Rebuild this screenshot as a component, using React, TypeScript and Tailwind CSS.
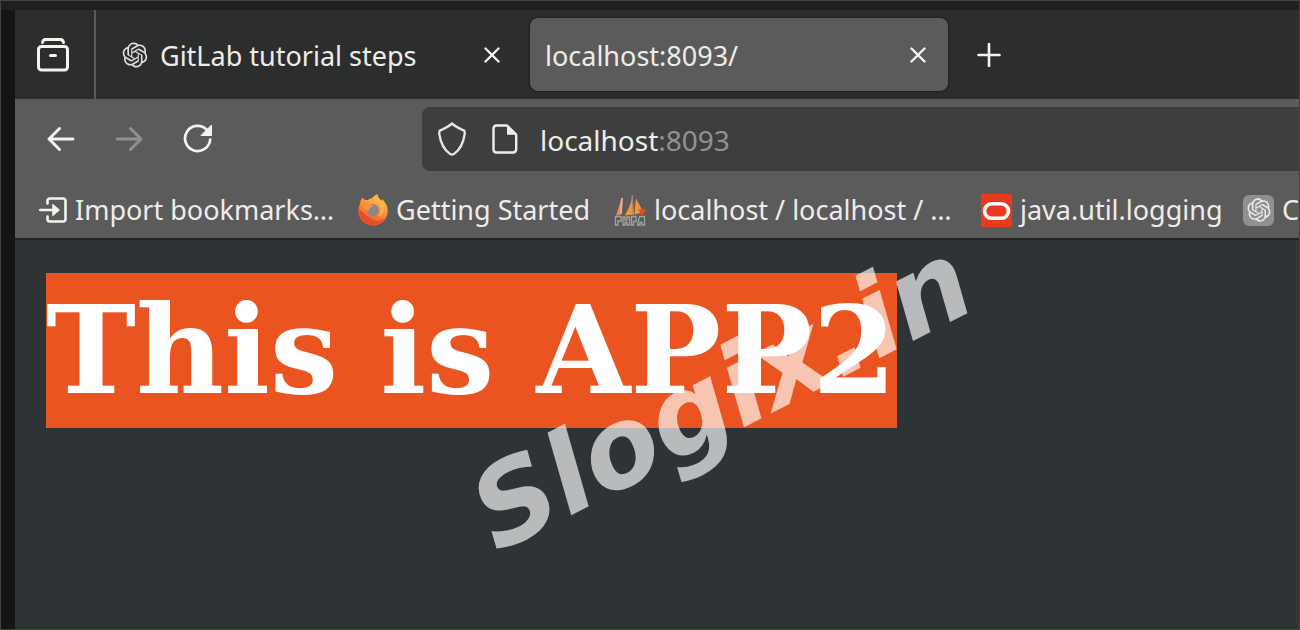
import type { ReactNode } from "react";
import { RiOpenaiFill } from "react-icons/ri";

function ArchiveIcon() {
  return (
    <svg width="32" height="34" viewBox="0 0 32 34" fill="none" stroke="#f6f3ef" strokeWidth="3" strokeLinecap="round">
      <path d="M5.500 4.500C6 2.200 7 1.600 8.500 1.600h15c1.500 0 2.500.6 3 2.900" />
      <rect x="1.500" y="8.500" width="29" height="23.500" rx="3" />
      <path d="M13.500 17.500h5" />
    </svg>
  );
}

function CloseIcon() {
  return (
    <svg width="16" height="16" viewBox="0 0 16 16" stroke="#f6f3ef" strokeWidth="2.400" strokeLinecap="round">
      <path d="M1.500 1.500l13 13M14.500 1.500l-13 13" />
    </svg>
  );
}

function PlusIcon() {
  return (
    <svg width="24" height="24" viewBox="0 0 24 24" stroke="#f6f3ef" strokeWidth="2.600" strokeLinecap="round">
      <path d="M12 1v22M1.500 12h21" />
    </svg>
  );
}

function ArrowIcon({ flip = false }: { flip?: boolean }) {
  return (
    <svg
      width="28"
      height="26"
      viewBox="0 0 28 26"
      fill="none"
      stroke={flip ? "#8d9291" : "#f6f3ef"}
      strokeWidth="2.900"
      strokeLinecap="round"
      strokeLinejoin="round"
      className={flip ? "-scale-x-100" : ""}
    >
      <path d="M26 13H2M12.500 2.500L2 13l10.500 10.500" />
    </svg>
  );
}

function ReloadIcon() {
  return (
    <svg width="30" height="30" viewBox="0 0 30 30" fill="none">
      <path d="M23.500 5.500A12.600 12.600 0 1 0 27.200 15.500" stroke="#f6f3ef" strokeWidth="2.700" strokeLinecap="round" />
      <path d="M28.500 1v10.500H18z" fill="#f6f3ef" stroke="#f6f3ef" strokeLinejoin="round" />
    </svg>
  );
}

function ShieldIcon() {
  return (
    <svg width="28" height="34" viewBox="0 0 30 34" preserveAspectRatio="none" fill="none" stroke="#e6e4e1" strokeWidth="2.500" strokeLinejoin="round">
      <path d="M15 1.500C11 5 6 6.700 2.200 8.500c-1.300.6-1 2-.7 4C3 22 7.500 28.500 13 32q2 1 4 0c5.500-3.500 10-10 11.500-19.500.3-2 .6-3.400-.7-4C24 6.700 19 5 15 1.500z" />
    </svg>
  );
}

function PageIcon() {
  return (
    <svg width="26" height="30" viewBox="0 0 26 30" fill="none">
      <path
        d="M4.500 1.500H15l9.200 9.200V25q0 3.500-3.500 3.500H4.500Q1.500 28.500 1.500 25V5q0-3.500 3-3.500z"
        stroke="#f0eeeb"
        strokeWidth="2.400"
        strokeLinejoin="round"
      />
      <path d="M15 1.500v9.200h9.200z" fill="#f0eeeb" />
    </svg>
  );
}

function ImportIcon() {
  return (
    <svg width="28" height="26" viewBox="0 0 28 26" fill="none" stroke="#f6f3ef" strokeWidth="2.600" strokeLinecap="round">
      <path d="M8.500 6.500V4q0-2.500 2.500-2.500h13q2.500 0 2.500 2.500v18q0 2.500-2.500 2.500H11q-2.500 0-2.500-2.500v-2.500" />
      <path d="M1.200 13h14" />
      <path d="M14 7.500L20.500 13 14 18.500z" fill="#f6f3ef" strokeWidth="1" />
    </svg>
  );
}

function FirefoxIcon() {
  return (
    <svg width="30" height="32" viewBox="0 0 30 32">
      <defs>
        <linearGradient id="fox" x1="0.7" y1="0.1" x2="0.3" y2="1">
          <stop offset="0" stopColor="#ffbd4f" />
          <stop offset="0.45" stopColor="#f98b33" />
          <stop offset="1" stopColor="#e34a2b" />
        </linearGradient>
      </defs>
      <path
        d="M4.500 3.500c1 2 2.500 2.600 5.500 2.500 1-1 3-2 4.500-2C15 2.500 17 1.300 19.200.3c.5 3.200 2.300 4.200 4.500 6.500l.8-1.500c3.600 4 5.300 7.500 5.200 12.200C29.400 25.500 23 31.700 15 31.700S.6 25.500.4 17.500C.3 13 1.500 11.500 2 9.500c.3-2.500 1.300-4.500 2.500-6z"
        fill="url(#fox)"
      />
      <path d="M1 15c0 9 5 14 12 15.500 6 1 11-2 13.500-6-4 3-9 3.500-13.500.5C9 22 5 19 1 15z" fill="#e84a2c" />
      <circle cx="15" cy="16" r="6" fill="#8a8784" />
      <path d="M5.500 9.500c3-1.200 5 0 6.300 1.200l3.700.6c0 1.500-3.500 2-4 3.500-.8 2.300-2 2.500-3.500 1.500-1.500-1.500-2.500-4.500-2.500-6.800z" fill="#fb9137" />
      <path d="M19.200.3c-2.500 3.700-2 6.200 1 9.200 4 4 3 9.500 0 13 5-1 6-6 5.500-9.500C25 7 20 6 19.200.3z" fill="#ffb04a" />
    </svg>
  );
}

// phpMyAdmin: three sails above the outlined hull lettering
function SailsIcon() {
  return (
    <svg width="32" height="32" viewBox="0 0 32 32" fill="none">
      <path d="M7.500 4L2 21.500l5.500-1z" fill="#f0864a" />
      <path d="M8 4l-1 15.500" stroke="#e8b5a5" strokeWidth="1.800" />
      <path d="M18 .5C18 9 14 15 11 21.500l9-1z" fill="#f8932f" />
      <path d="M18.300 1l.7 18.500" stroke="#9b8c83" strokeWidth="1.200" />
      <path d="M22 4.500c-1 6-1 10-1.500 16l8.500-2C27.500 13 24 9 22 4.500z" fill="#f8932f" />
      <path d="M24 15.500l6.500-.5 1.500 1.500-4 5z" fill="#e34b1f" />
      <path
        d="M1.500 31v-8.500H7v4.500H4v4zM9 31v-8h2v3h2v-3h2.500v8H13v-2.500h-2V31zM17.500 31v-8.500H22v5h-2.500V31zM23.500 31l2-8.500h5V31H28v-2.500h-2V31z"
        stroke="#a2a4a3"
        strokeWidth="1.300"
      />
    </svg>
  );
}

function OracleIcon() {
  return (
    <svg width="31" height="33" viewBox="0 0 31 33" fill="none">
      <path d="M0 0h31v33H0z" fill="#ea3a1e" />
      <rect x="3.500" y="9.800" width="24" height="14.500" rx="7.200" stroke="#fff" strokeWidth="3.600" />
    </svg>
  );
}

function Bookmark({ icon, label, className = "" }: { icon: ReactNode; label: string; className?: string }) {
  return (
    <a href="#" className={`flex shrink-0 items-center gap-2 whitespace-nowrap ${className}`}>
      {icon}
      <span>{label}</span>
    </a>
  );
}

function TabStrip() {
  return (
    <div className="flex h-[89px] items-center bg-[#2c2e2d]">
      <button aria-label="Recent browsing" className="flex h-full w-[81px] items-center justify-center border-r-2 border-[#5b5b5b] pr-1">
        <ArchiveIcon />
      </button>
      <div className="ml-6 flex w-[410px] items-center pr-[30px]">
        <RiOpenaiFill size={30} color="#e0e0de" className="mr-[10px] shrink-0" />
        <span className="grow pt-[2px]">GitLab tutorial steps</span>
        <button aria-label="Close tab">
          <CloseIcon />
        </button>
      </div>
      <div className="flex h-[73px] w-[418px] items-center justify-between rounded-lg bg-[#5b5b5b] pr-[22px] pl-[15px] shadow-[0_0_3px_#111]">
        <span className="pt-[2px]">localhost:8093/</span>
        <button aria-label="Close tab">
          <CloseIcon />
        </button>
      </div>
      <button aria-label="New tab" className="ml-[29px]">
        <PlusIcon />
      </button>
    </div>
  );
}

function Toolbar() {
  return (
    <div className="flex items-center pt-2">
      <div className="flex w-[407px] shrink-0 items-center gap-10 pl-8">
        <button aria-label="Back"><ArrowIcon /></button>
        <button aria-label="Forward" disabled><ArrowIcon flip /></button>
        <button aria-label="Reload"><ReloadIcon /></button>
      </div>
      <div className="flex h-16 grow items-center rounded-l-lg bg-[#3e3e3e] pl-4">
        <ShieldIcon />
        <span className="mr-[22px] ml-[26px]"><PageIcon /></span>
        <span className="pt-[2px] text-[28px]">
          localhost<span className="text-[#8f9392]">:8093</span>
        </span>
      </div>
    </div>
  );
}

export default function App() {
  return (
    <div className="relative flex min-h-screen flex-col overflow-hidden border border-[#444444] bg-[#141414] font-['Noto_Sans',sans-serif] text-[27px] leading-9 text-[#eeecea]">
      <div className="h-[9px] bg-[#1e1f1e]" />
      <div className="ml-[14px] flex grow flex-col">
        <TabStrip />
        <div className="border-b-2 border-[#232525] bg-[#5b5b5b]">
          <Toolbar />
          <nav className="flex h-[67px] items-center overflow-hidden pt-[11px] pl-6">
            <Bookmark icon={<ImportIcon />} label="Import bookmarks…" className="w-[319px]" />
            <Bookmark icon={<FirefoxIcon />} label="Getting Started" className="w-[256px]" />
            <Bookmark icon={<SailsIcon />} label="localhost / localhost / …" className="w-[367px]" />
            <Bookmark icon={<OracleIcon />} label="java.util.logging" className="w-[262px]" />
            <Bookmark
              icon={
                <span className="flex size-[31px] items-center justify-center rounded-md bg-[#8d9291]">
                  <RiOpenaiFill size={28} color="#ecebe9" />
                </span>
              }
              label="C"
            />
          </nav>
        </div>
        <main className="grow bg-[#2e3436] px-[31px] pt-[33px]">
          <h1 className="w-fit bg-[#e95420] font-['DejaVu_Serif',serif] text-[121px] leading-[155px] font-bold whitespace-nowrap text-white">
            This is APP2
          </h1>
        </main>
      </div>
      <div className="pointer-events-none absolute top-[339px] left-[449px] -rotate-27 font-['DejaVu_Sans',sans-serif] text-[111px] leading-none font-bold whitespace-nowrap text-white/66 italic">
        Slogix.in
      </div>
    </div>
  );
}
